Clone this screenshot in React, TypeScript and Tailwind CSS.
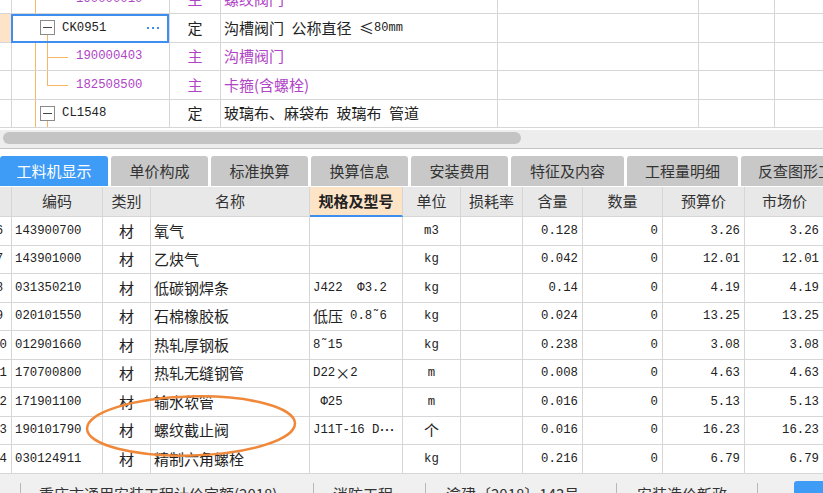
import React from "react";

const MONO = "font-['Liberation_Mono',monospace] text-[12.3px]";
const PURPLE = "text-[#b044c6]";
const LINE = "bg-[#f5b766]";
const GRID = "border-[#d6d6d6]";

type TreeRow = {
  kind: "child" | "childLast" | "parent" | "selected" | "partial";
  code: string;
  type: string;
  name: React.ReactNode;
  purple?: boolean;
};

const treeRows: TreeRow[] = [
  { kind: "partial", code: "190000010", type: "主", name: "螺纹阀门", purple: true },
  {
    kind: "selected",
    code: "CK0951",
    type: "定",
    name: (
      <>
        沟槽阀门{"\u2002"}公称直径{"\u2002"}≤<span className="font-['Liberation_Mono',monospace] text-[12px]">80mm</span>
      </>
    ),
  },
  { kind: "child", code: "190000403", type: "主", name: "沟槽阀门", purple: true },
  { kind: "childLast", code: "182508500", type: "主", name: "卡箍(含螺栓)", purple: true },
  { kind: "parent", code: "CL1548", type: "定", name: "玻璃布、麻袋布\u2002玻璃布\u2002管道" },
];

function MinusBox() {
  return (
    <div className="relative z-10 flex h-[15px] w-[15px] items-center justify-center border border-[#8a8a8a] bg-white">
      <div className="h-px w-[9px] bg-[#444]" />
    </div>
  );
}

function TreeCodeCell({ row }: { row: TreeRow }) {
  const isParent = row.kind === "parent" || row.kind === "selected";
  return (
    <div className={`relative h-full border-b border-r ${GRID}`}>
      {row.kind !== "selected" && (
        <div className={`absolute left-[23px] top-0 bottom-0 w-px ${LINE}`} />
      )}
      {isParent && <div className={`absolute left-[35px] top-[21px] bottom-0 w-px ${LINE}`} />}
      {row.kind === "child" && <div className={`absolute left-[35px] top-0 bottom-0 w-px ${LINE}`} />}
      {row.kind === "childLast" && <div className={`absolute left-[35px] top-0 h-[14px] w-px ${LINE}`} />}
      {(row.kind === "child" || row.kind === "childLast") && (
        <div className={`absolute left-[35px] top-[14px] h-px w-[21px] ${LINE}`} />
      )}
      {isParent ? (
        <div className="flex h-full items-center pl-[28px]">
          <MinusBox />
          <span className={`ml-[7px] ${MONO} text-[#222]`}>{row.code}</span>
          {row.kind === "selected" && (
            <div className="ml-auto mr-[10px] flex gap-[3px]">
              <div className="h-[2px] w-[2px] bg-[#3d8ef0]" />
              <div className="h-[2px] w-[2px] bg-[#3d8ef0]" />
              <div className="h-[2px] w-[2px] bg-[#3d8ef0]" />
            </div>
          )}
        </div>
      ) : (
        <div className="flex h-full items-center pl-[64px]">
          <span className={`${MONO} ${PURPLE}`}>{row.code}</span>
        </div>
      )}
      {row.kind === "selected" && (
        <div className="pointer-events-none absolute -left-px top-0 -bottom-px right-0 border-2 border-[#3d8ef0]" />
      )}
    </div>
  );
}

function TopTree() {
  return (
    <div className="h-[128px] overflow-hidden">
      <div className="-mt-[14.5px]">
        {treeRows.map((r, i) => (
          <div
            key={i}
            className="grid h-[28.5px] grid-cols-[12px_158px_51px_277px_201px_76px_48px] text-[15px]"
          >
            <div className={`border-b border-r ${GRID} ${r.kind === "selected" ? "bg-[#fde4c8]" : ""}`} />
            <TreeCodeCell row={r} />
            <div
              className={`flex items-center justify-center border-b border-r ${GRID} ${r.purple ? PURPLE : "text-[#222]"}`}
            >
              {r.type}
            </div>
            <div
              className={`flex items-center whitespace-nowrap border-b border-r pl-[3px] ${GRID} ${r.purple ? PURPLE : "text-[#222]"}`}
            >
              {r.name}
            </div>
            <div className={`border-b border-r ${GRID}`} />
            <div className={`border-b border-r ${GRID}`} />
            <div className={`border-b ${GRID}`} />
          </div>
        ))}
      </div>
    </div>
  );
}

const tabs = [
  { t: "工料机显示", w: "w-[108px]", active: true },
  { t: "单价构成", w: "w-[97px]" },
  { t: "标准换算", w: "w-[97px]" },
  { t: "换算信息", w: "w-[97px]" },
  { t: "安装费用", w: "w-[97px]" },
  { t: "特征及内容", w: "w-[113px]" },
  { t: "工程量明细", w: "w-[111px]" },
  { t: "反查图形工程量", w: "w-[110px]" },
];

function Tabs() {
  return (
    <div className="flex h-[31px] items-start gap-[3px] overflow-hidden">
      {tabs.map((t, i) => (
        <div
          key={i}
          className={`flex h-[30px] shrink-0 items-center overflow-hidden whitespace-nowrap rounded-t-[3px] text-[15px] ${t.w} ${
            t.active ? "justify-center bg-[#3f9cf6] text-white" : "bg-[#c8c8c8] text-[#333]"
          } ${!t.active && i < 7 ? "justify-center" : ""} ${i === 7 ? "pl-[17px]" : ""}`}
        >
          {t.t}
        </div>
      ))}
    </div>
  );
}

const COLS = "grid-cols-[12px_91px_48px_159px_93px_58px_62px_60px_80px_82px_80px]";

const headers = ["", "编码", "类别", "名称", "规格及型号", "单位", "损耗率", "含量", "数量", "预算价", "市场价"];

type DataRow = {
  n: string;
  code: string;
  name: string;
  spec: React.ReactNode;
  unit: React.ReactNode;
  qty: string;
  price: string;
};

const M = (s: string) => <span className={MONO}>{s}</span>;

const dataRows: DataRow[] = [
  { n: "6", code: "143900700", name: "氧气", spec: "", unit: M("m3"), qty: "0.128", price: "3.26" },
  { n: "7", code: "143901000", name: "乙炔气", spec: "", unit: M("kg"), qty: "0.042", price: "12.01" },
  { n: "8", code: "031350210", name: "低碳钢焊条", spec: M("J422\u00a0\u00a0Φ3.2"), unit: M("kg"), qty: "0.14", price: "4.19" },
  {
    n: "9",
    code: "020101550",
    name: "石棉橡胶板",
    spec: (
      <>
        低压<span className={`ml-[7px] ${MONO}`}>0.8˜6</span>
      </>
    ),
    unit: M("kg"),
    qty: "0.024",
    price: "13.25",
  },
  { n: "10", code: "012901660", name: "热轧厚钢板", spec: M("8˜15"), unit: M("kg"), qty: "0.238", price: "3.08" },
  {
    n: "11",
    code: "170700800",
    name: "热轧无缝钢管",
    spec: (
      <>
        {M("D22")}×{M("2")}
      </>
    ),
    unit: M("m"),
    qty: "0.008",
    price: "4.63",
  },
  { n: "12", code: "171901100", name: "输水软管", spec: M("\u00a0Φ25"), unit: M("m"), qty: "0.016", price: "5.13" },
  {
    n: "13",
    code: "190101790",
    name: "螺纹截止阀",
    spec: (
      <>
        {M("J11T-16 D")}…
      </>
    ),
    unit: "个",
    qty: "0.016",
    price: "16.23",
  },
  { n: "14", code: "030124911", name: "精制六角螺栓", spec: "", unit: M("kg"), qty: "0.216", price: "6.79" },
];

function Table() {
  const cell = `border-b border-r ${GRID} flex items-center overflow-hidden whitespace-nowrap`;
  return (
    <div className="overflow-hidden">
      <div className={`grid h-[30px] w-[825px] ${COLS} text-[15px] text-[#333]`}>
        {headers.map((h, i) => (
          <div
            key={i}
            className={`flex items-center justify-center border-r ${GRID} ${
              i === 4
                ? "border-b-2 border-b-[#3d8ef0] bg-[#fde4c6] font-bold text-[#222]"
                : "border-b bg-[#e8e8e8]"
            }`}
          >
            {h}
          </div>
        ))}
      </div>
      {dataRows.map((r, i) => (
        <div key={i} className={`grid h-[28.5px] w-[825px] ${COLS} text-[15px] text-[#222]`}>
          <div className={`${cell} relative`}>
            <div className={`-ml-[13px] w-[25px] shrink-0 text-center ${MONO}`}>{r.n}</div>
          </div>
          <div className={`${cell} pl-[3px]`}>
            <span className={MONO}>{r.code}</span>
          </div>
          <div className={`${cell} justify-center`}>材</div>
          <div className={`${cell} pl-[3px]`}>{r.name}</div>
          <div className={`${cell} pl-[3px]`}>{r.spec}</div>
          <div className={`${cell} justify-center`}>{r.unit}</div>
          <div className={cell} />
          <div className={`${cell} justify-end pr-[4px]`}>
            <span className={MONO}>{r.qty}</span>
          </div>
          <div className={`${cell} justify-end pr-[4px]`}>
            <span className={MONO}>0</span>
          </div>
          <div className={`${cell} justify-end pr-[4px]`}>
            <span className={MONO}>{r.price}</span>
          </div>
          <div className={`${cell} justify-end pr-[5px]`}>
            <span className={MONO}>{r.price}</span>
          </div>
        </div>
      ))}
    </div>
  );
}

function Sep() {
  return <div className="mt-[9px] h-[12px] w-px shrink-0 bg-[#b8b8b8]" />;
}

function BottomBar() {
  return (
    <div className="flex h-[20px] bg-[#f0f0f0] text-[15px] leading-[20px] text-[#333]">
      <div className="w-[20px] shrink-0" />
      <Sep />
      <div className="w-[292px] shrink-0 whitespace-nowrap pl-[18px] pt-[10px]">重庆市通用安装工程计价定额(2018)</div>
      <Sep />
      <div className="w-[111px] shrink-0 whitespace-nowrap pl-[19px] pt-[10px]">消防工程</div>
      <Sep />
      <div className="w-[190px] shrink-0 whitespace-nowrap pl-[20px] pt-[10px]">渝建〔2018〕143号</div>
      <Sep />
      <div className="w-[140px] shrink-0 whitespace-nowrap pl-[20px] pt-[10px]">安装造价新政</div>
      <Sep />
      <div className="w-[36px] shrink-0" />
      <div className="mt-[7px] h-[13px] w-[29px] shrink-0 rounded-tl-[3px] bg-[#3f9cf6]" />
    </div>
  );
}

export default function App() {
  return (
    <div className="relative h-[493px] w-[823px] overflow-hidden bg-white font-['Noto_Sans_CJK_SC',sans-serif] text-[#222]">
      <TopTree />
      <div className="h-[2px]" />
      <div className="h-[18px] bg-[#ededed] pl-[3px] pt-[2px]">
        <div className="h-[12px] w-[518px] rounded-full bg-[#c4c4c4]" />
      </div>
      <div className="h-px bg-[#c4c4c4]" />
      <div className="h-[7px]" />
      <Tabs />
      <Table />
      <BottomBar />
      <svg className="pointer-events-none absolute left-0 top-0" width="823" height="493">
        <ellipse
          cx="191"
          cy="426"
          rx="104"
          ry="29.5"
          transform="rotate(-1.5 191 426)"
          fill="none"
          stroke="#f0883a"
          strokeWidth="2.5"
        />
      </svg>
    </div>
  );
}
